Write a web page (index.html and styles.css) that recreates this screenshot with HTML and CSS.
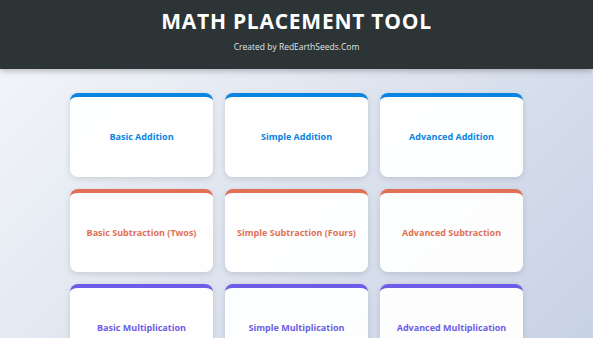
FILE: index.html
```html
<!DOCTYPE html>
<html>
<head>
<meta charset="utf-8">
<link rel="stylesheet" href="styles.css">
</head>
<body>
<header class="header">
  <h1 class="title">MATH PLACEMENT TOOL</h1>
  <p class="subtitle">Created by RedEarthSeeds.Com</p>
</header>
<main class="grid">
  <div class="card add"><span>Basic Addition</span></div>
  <div class="card add"><span>Simple Addition</span></div>
  <div class="card add"><span>Advanced Addition</span></div>
  <div class="card sub"><span>Basic Subtraction (Twos)</span></div>
  <div class="card sub"><span>Simple Subtraction (Fours)</span></div>
  <div class="card sub"><span>Advanced Subtraction</span></div>
  <div class="card mul"><span>Basic Multiplication</span></div>
  <div class="card mul"><span>Simple Multiplication</span></div>
  <div class="card mul"><span>Advanced Multiplication</span></div>
</main>
</body>
</html>
```
FILE: styles.css
```css
html, body {
  margin: 0;
  padding: 0;
}
body {
  font-family: "Open Sans", "Noto Sans", sans-serif;
  background: linear-gradient(135deg, #f5f7fa 0%, #c8d2e5 100%);
  height: 338px;
  overflow: hidden;
}
.header {
  background: #2d3436;
  color: #fff;
  text-align: center;
  height: 69px;
  box-sizing: border-box;
  padding-top: 7px;
  box-shadow: 0 2px 6px rgba(0,0,0,0.25);
}
.title {
  margin: 0;
  font-size: 21px;
  font-weight: 700;
  letter-spacing: 0.75px;
  line-height: 28px;
}
.subtitle {
  margin: 6px 0 0;
  font-size: 8.5px;
  line-height: 12px;
  color: #dfe6e9;
}
.grid {
  display: grid;
  grid-template-columns: repeat(3, 143px);
  column-gap: 12px;
  row-gap: 12px;
  justify-content: center;
  padding-top: 24px;
}
.card {
  height: 83.5px;
  box-sizing: border-box;
  background: rgba(255,255,255,0.95);
  border-radius: 8px;
  border-top: 4px solid;
  box-shadow: 0 2px 6px rgba(0,0,0,0.12);
  display: flex;
  align-items: center;
  justify-content: center;
  font-size: 9px;
  font-weight: 700;
  text-align: center;
}
.add { border-top-color: #0984e3; color: #0984e3; }
.sub { border-top-color: #e17055; color: #e17055; }
.mul { border-top-color: #6c5ce7; color: #6c5ce7; }
```
